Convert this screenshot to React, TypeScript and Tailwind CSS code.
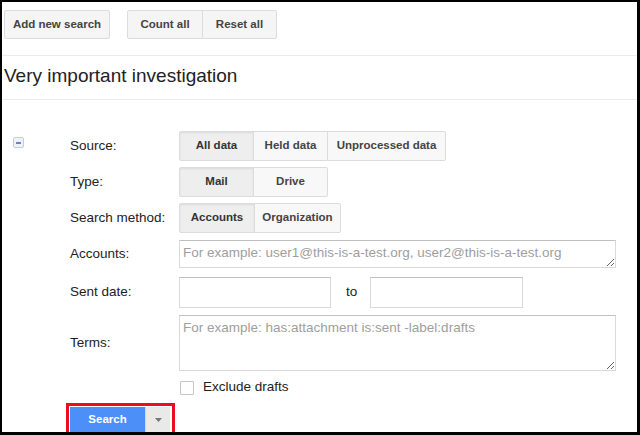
import React from "react";

const font = "font-['Liberation_Sans',Arial,sans-serif]";

type Seg = { label: string; w: string; on?: boolean };

const rows: { label: string; items: Seg[] }[] = [
  {
    label: "Source:",
    items: [
      { label: "All data", w: "w-[75px]", on: true },
      { label: "Held data", w: "w-[75px]" },
      { label: "Unprocessed data", w: "w-[119px]" },
    ],
  },
  {
    label: "Type:",
    items: [
      { label: "Mail", w: "w-[75px]", on: true },
      { label: "Drive", w: "w-[75px]" },
    ],
  },
  {
    label: "Search method:",
    items: [
      { label: "Accounts", w: "w-[76px]", on: true },
      { label: "Organization", w: "w-[87px]" },
    ],
  },
];

function Segmented({ items }: { items: Seg[] }) {
  return (
    <div className="flex h-[30px]">
      {items.map((it, i) => (
        <div
          key={it.label}
          className={`${it.w} flex items-center justify-center border border-[#dcdcdc] text-[11.5px] font-bold ${
            i > 0 ? "-ml-px" : ""
          } ${
            it.on
              ? "bg-[#eeeeee] text-[#333] shadow-[inset_0_1px_2px_rgba(0,0,0,0.08)]"
              : "bg-[#f8f8f8] text-[#444]"
          } ${i === 0 ? "rounded-l-[2px]" : ""} ${i === items.length - 1 ? "rounded-r-[2px]" : ""}`}
        >
          {it.label}
        </div>
      ))}
    </div>
  );
}

function Label({ children }: { children: React.ReactNode }) {
  return <div className="w-[109px] shrink-0 text-[13.5px] text-[#222]">{children}</div>;
}

export default function App() {
  return (
    <div className={`w-[640px] h-[435px] bg-black pt-[2px] pl-[2px] pr-[3px] pb-[3px] ${font}`}>
      <div className="h-full bg-white overflow-hidden flex flex-col">
        {/* toolbar */}
        <div className="shrink-0 flex items-start gap-[17px] pl-[2px] pt-[8px] h-[53px]">
          <button className="h-[29px] w-[106px] rounded-[2px] border border-[#dcdcdc] bg-[#f5f5f5] text-[11.5px] font-bold text-[#444]">
            Add new search
          </button>
          <div className="flex h-[29px]">
            <button className="w-[76px] rounded-l-[2px] border border-[#dcdcdc] bg-[#f5f5f5] text-[11.5px] font-bold text-[#444]">
              Count all
            </button>
            <button className="-ml-px w-[75px] rounded-r-[2px] border border-[#dcdcdc] bg-[#f5f5f5] text-[11.5px] font-bold text-[#444]">
              Reset all
            </button>
          </div>
        </div>

        <div className="shrink-0 h-[45px] border-y border-[#ebebeb] flex items-center pl-[2px] pb-[4px]">
          <h1 className="text-[19px] text-[#222] leading-none">Very important investigation</h1>
        </div>

        {/* form */}
        <div className="shrink-0 flex pt-[31px]">
          <div className="w-[68px] shrink-0 pl-[11px] pt-[6px]">
            <div className="w-[11px] h-[11px] rounded-[2px] border border-[#c3cde0] bg-[#eef2f9] flex items-center justify-center">
              <div className="w-[5px] h-[2px] bg-[#6f84ad]" />
            </div>
          </div>

          <div className="flex flex-col">
            {rows.map((r, i) => (
              <div key={r.label} className={`flex items-center ${i > 0 ? "mt-[6px]" : ""}`}>
                <Label>{r.label}</Label>
                <Segmented items={r.items} />
              </div>
            ))}

            <div className="flex items-center mt-[7px]">
              <Label>Accounts:</Label>
              <textarea
                rows={1}
                placeholder="For example: user1@this-is-a-test.org, user2@this-is-a-test.org"
                className="w-[437px] h-[28px] border border-[#d9d9d9] border-t-[#c0c0c0] px-[3px] py-[4px] text-[13.5px] leading-[16px] text-[#222] placeholder:text-[#9e9e9e] outline-none"
              />
            </div>

            <div className="flex items-center mt-[9px]">
              <Label>Sent date:</Label>
              <input className="w-[152px] h-[31px] border border-[#d9d9d9] border-t-[#c0c0c0] outline-none" />
              <span className="w-[39px] pl-[15px] text-[13.5px] text-[#222]">to</span>
              <input className="w-[153px] h-[31px] border border-[#d9d9d9] border-t-[#c0c0c0] outline-none" />
            </div>

            <div className="flex items-center mt-[7px]">
              <Label>Terms:</Label>
              <textarea
                placeholder="For example: has:attachment is:sent -label:drafts"
                className="w-[437px] h-[56px] border border-[#d9d9d9] border-t-[#c0c0c0] px-[3px] py-[4px] text-[13.5px] leading-[16px] text-[#222] placeholder:text-[#9e9e9e] outline-none"
              />
            </div>

            <div className="flex items-center mt-[9px] ml-[110px] h-[15px]">
              <div className="w-[14px] h-[14px] rounded-[1px] border border-[#c6c6c6] bg-white" />
              <span className="ml-[9px] text-[13.5px] text-[#222]">Exclude drafts</span>
            </div>

            <div className="-ml-[4px] mt-[8px] w-[109px] border-[3px] border-[#e8101f] p-[1px] flex h-[33px]">
              <button className="w-[75px] h-full bg-[#4d8ff8] text-white text-[11.5px] font-bold">Search</button>
              <button className="w-[25px] h-full bg-[#e9e9e9] border-l border-[#d6d6d6] flex items-center justify-center">
                <svg width="7" height="4" viewBox="0 0 7 4">
                  <path d="M0 0h7L3.5 4z" fill="#777" />
                </svg>
              </button>
            </div>
          </div>
        </div>
      </div>
    </div>
  );
}
